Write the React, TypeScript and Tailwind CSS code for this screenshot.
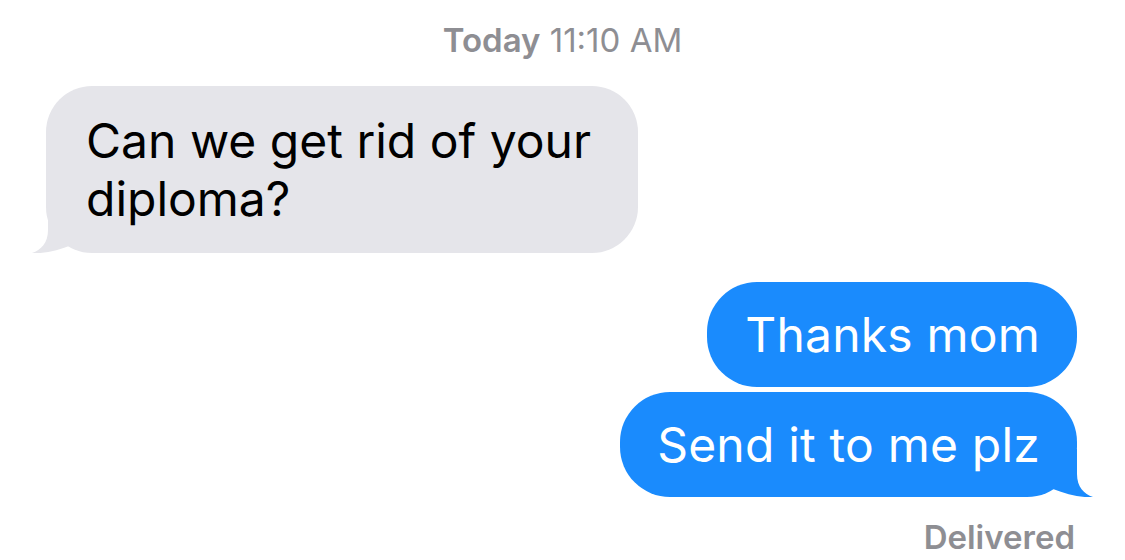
const Tail = ({ color, side }: { color: string; side: "left" | "right" }) => (
  <svg
    width="52"
    height="50"
    viewBox="0 0 52 50"
    className={
      side === "left"
        ? "absolute bottom-0 left-[-16px]"
        : "absolute bottom-0 right-[-18px] -scale-x-100"
    }
  >
    <path d="M18 2 L18 27 C18 40 11 47 2 50 C15 51 29 47 42 42 L42 2 Z" fill={color} />
  </svg>
);

const App = () => {
  return (
    <div className="w-[1125px] h-[560px] bg-white overflow-hidden font-['Inter',sans-serif] antialiased">
      <div className="pt-[21px] text-center text-[33px] leading-[38px] text-[#8e8e93]">
        <span className="font-semibold">Today</span> 11:10 AM
      </div>

      <div className="mt-[27px] pl-[46px]">
        <div className="relative w-[592px] rounded-[46px] bg-[#e5e5ea] pl-[40px] pr-[20px] pt-[26px] pb-[25px] text-[48px] leading-[58px] text-black">
          <Tail color="#e5e5ea" side="left" />
          <span className="relative">
            Can we get rid of your
            <br />
            diploma?
          </span>
        </div>
      </div>

      <div className="mt-[29px] pr-[48px] flex flex-col items-end gap-[5px]">
        <div className="relative rounded-[50px] bg-[#1a8bfd] pl-[38px] pr-[37px] py-[24px] text-[48px] leading-[57px] tracking-[0.2px] text-white">
          Thanks mom
        </div>
        <div className="relative rounded-[50px] bg-[#1a8bfd] pl-[37px] pr-[37px] py-[24px] text-[48px] leading-[57px] tracking-[0.2px] text-white">
          <Tail color="#1a8bfd" side="right" />
          <span className="relative">Send it to me plz</span>
        </div>
        <div className="mt-[17px] mr-[2px] text-[33px] leading-[36px] font-semibold text-[#8e8e93]">
          Delivered
        </div>
      </div>
    </div>
  );
};

export default App;
